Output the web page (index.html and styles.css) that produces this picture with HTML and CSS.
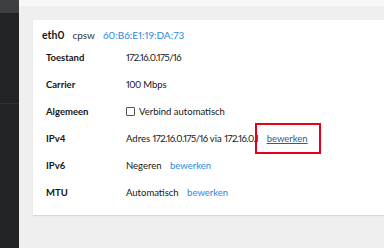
FILE: index.html
```html
<!DOCTYPE html>
<html lang="nl">
<head>
    <meta charset="UTF-8">
    <meta name="viewport" content="width=device-width, initial-scale=1.0">
    <title>eth0 - Netwerk</title>
    <link rel="stylesheet" href="styles.css">
</head>
<body>
    <!-- Zijbalk -->
    <div class="sidebar">
        <div class="sidebar-top"></div>
        <div class="sidebar-sep"></div>
    </div>

    <!-- Hoofdgedeelte -->
    <div class="main">
        <div class="topstrip"></div>
        <div class="card">
            <div class="card-header">
                <span class="iface">eth0</span>
                <span class="driver">cpsw</span>
                <a class="link mac">60:B6:E1:19:DA:73</a>
            </div>

            <div class="rows">
                <div class="label">Toestand</div>
                <div class="value"><span class="num">172.16.0.175/16</span></div>

                <div class="label">Carrier</div>
                <div class="value"><span class="num">100</span> Mbps</div>

                <div class="label">Algemeen</div>
                <div class="value">
                    <label class="check"><span class="box"></span>Verbind automatisch</label>
                </div>

                <div class="label">IPv4</div>
                <div class="value">
                    Adres <span class="num">172.16.0.175/16</span> via <span class="num">172.16.0.1</span>
                    <span class="marked"><a class="link active">bewerken</a></span>
                </div>

                <div class="label">IPv6</div>
                <div class="value">Negeren <a class="link">bewerken</a></div>

                <div class="label">MTU</div>
                <div class="value">Automatisch <a class="link">bewerken</a></div>
            </div>
        </div>
    </div>
</body>
</html>
```

FILE: styles.css
```css
body {
    font-family: Lato, "Open Sans", sans-serif;
    font-variant-numeric: proportional-nums;
    margin: 0;
    display: flex;
    height: 248px;
    overflow: hidden;
    color: #151515;
}
.sidebar {
    width: 19px;
    background-color: #212427;
}
.sidebar-top {
    height: 13px;
    background-color: #3d4043;
}
.sidebar-sep {
    margin-top: 90px;
    height: 1px;
    background-color: #2e3134;
}
.main {
    flex: 1;
    background-color: #efefef;
    padding-left: 14px;
}
.topstrip {
    height: 6px;
    margin-left: -14px;
    background-color: #f7f7f7;
    margin-bottom: 14px;
}
.card {
    background-color: #fff;
    box-shadow: 0 1px 1px #d6d6d6;
    padding: 8px 0 9px 9px;
}
.card-header {
    height: 16px;
    line-height: 14px;
    font-size: 10px;
    display: flex;
    gap: 8px;
}
.iface {
    font-weight: 700;
    font-size: 10.5px;
}
.driver {
    color: #333;
}
.link {
    color: #2b8ae0;
}
.link.active {
    color: #2c5c98;
    text-decoration: underline;
}
.rows {
    display: grid;
    grid-template-columns: 80px auto;
    grid-auto-rows: 27px;
    align-items: center;
    padding-left: 4px;
    font-size: 9.5px;
}
.label {
    font-weight: 700;
}
.num {
    letter-spacing: -0.5px;
}
.value .link {
    margin-left: 6px;
}
.check {
    display: flex;
    align-items: center;
    gap: 4px;
}
.box {
    width: 7px;
    height: 7px;
    border: 1px solid #555;
    border-radius: 1px;
}
.marked {
    position: relative;
}
.marked::before {
    content: "";
    position: absolute;
    left: -6px;
    top: -10px;
    width: 62px;
    height: 27px;
    border: 2px solid #e4001b;
}
```
